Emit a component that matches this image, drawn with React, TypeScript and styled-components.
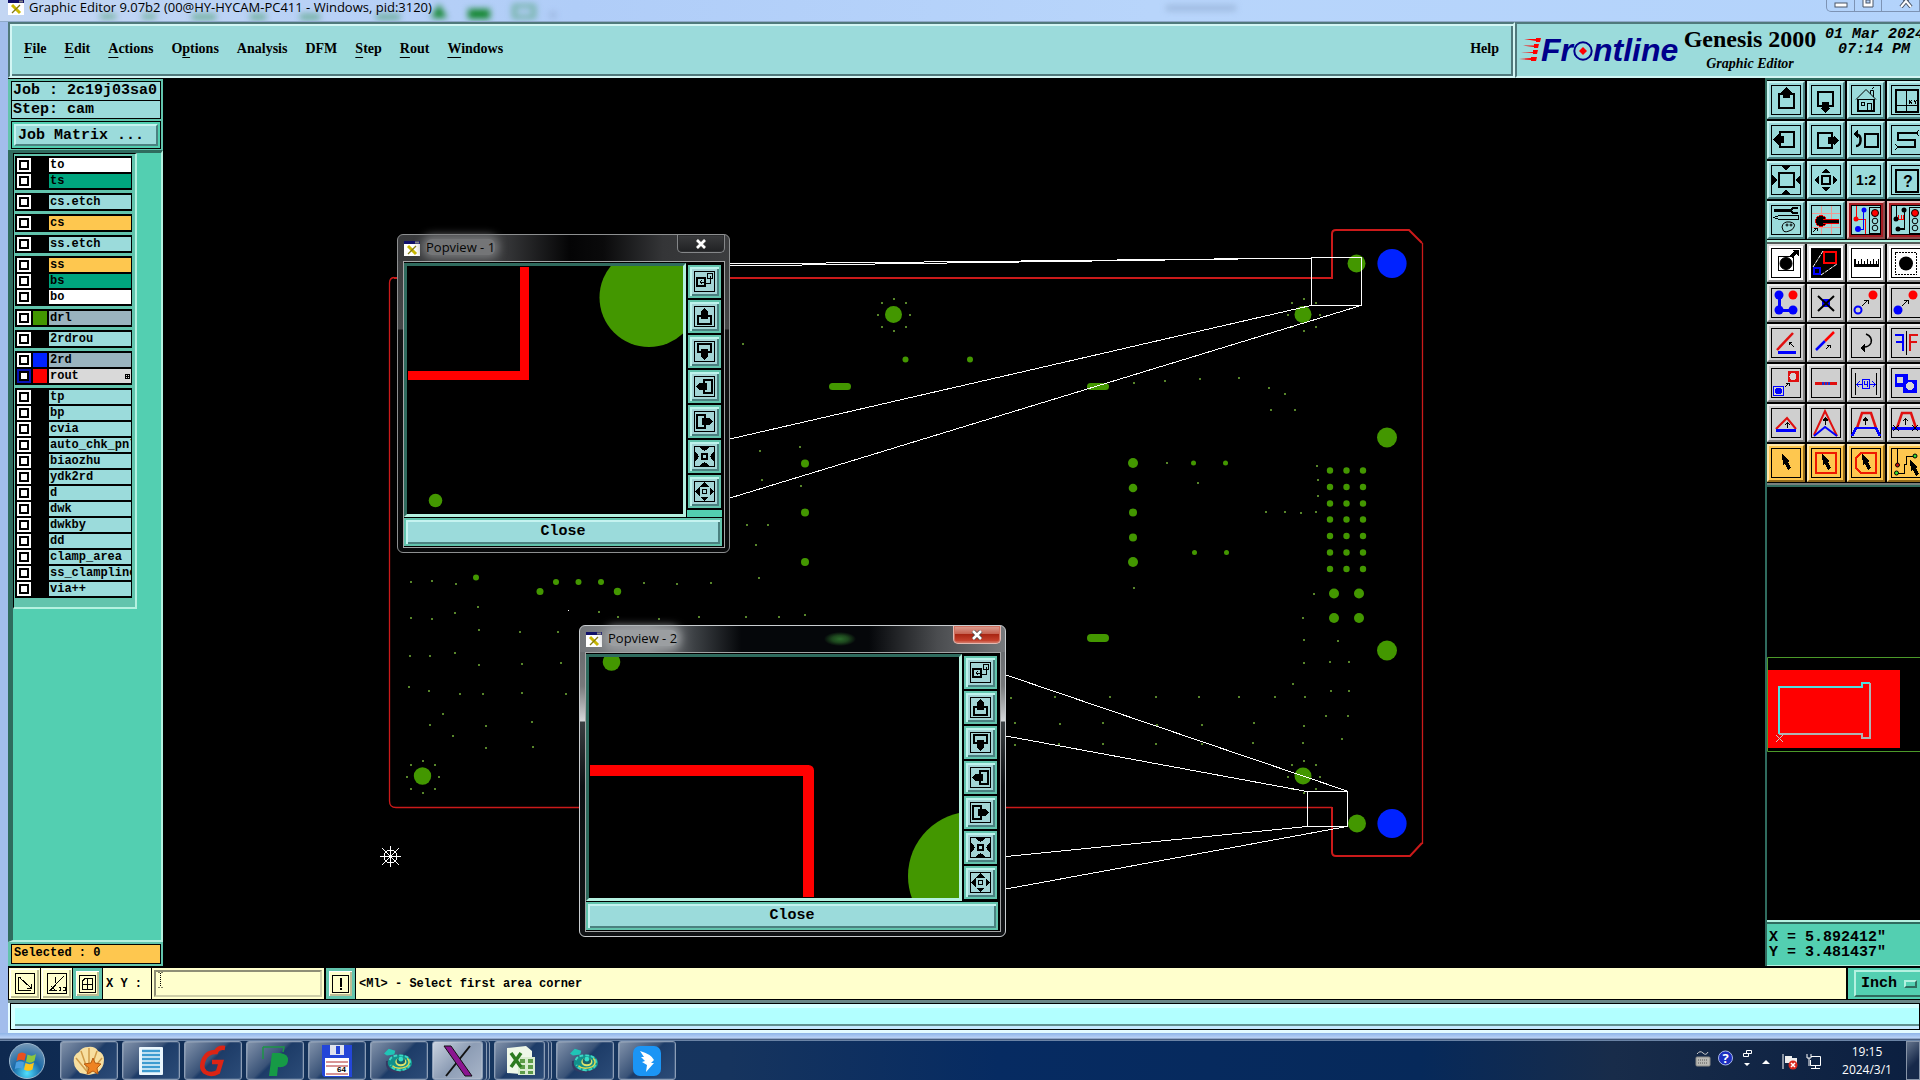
import React from "react";
import styled, { createGlobalStyle, css } from "styled-components";

const c = {
  teal: "#53cfb1",
  tealMid: "#62c4ad",
  tealDark: "#2f6b5e",
  tealLight: "#b4f1e0",
  aqua: "#9bdbdb",
  aquaLight: "#d3f6f4",
  aquaDark: "#50797c",
  amber: "#fec74f",
  cream: "#ffffcd",
  green: "#439700",
  red: "#ff0000",
  blue: "#0022ff",
};
const mono = `"Liberation Mono", "DejaVu Sans Mono", monospace`;
const serif = `"Liberation Serif", "DejaVu Serif", serif`;
const ui = `"Open Sans", "Noto Sans", sans-serif`;

const GlobalStyle = createGlobalStyle`
  * { box-sizing: border-box; }
  body { margin: 0; background: #000; overflow: hidden; }
  button, input, select { font: inherit; color: inherit; margin: 0; padding: 0; border-radius: 0; }
  svg { display: block; }
`;

const raised = css`
  border: 2px solid;
  border-color: #c5f3f0 #4b8180 #4b8180 #c5f3f0;
`;

const Desktop = styled.div`
  display: flex;
  flex-direction: column;
  height: 100vh;
  overflow: hidden;
  color: #000;
  background: #b7d2f7;
`;

/* ---------- title bar ---------- */
const TitleBar = styled.header`
  position: relative;
  display: flex;
  flex: none;
  height: 22px;
  padding: 0 0 0 8px;
  gap: 5px;
  overflow: hidden;
  background: linear-gradient(90deg, #c3d6f3, #b0cdf8 30%, #b8d5fb 60%, #b3d3fb);
  border-bottom: 1px solid #8fa9c9;
`;
const Glow = styled.svg`
  position: absolute;
  left: 0;
  top: 0;
  filter: blur(3px);
`;
const TitleText = styled.h1`
  position: relative;
  margin: 0;
  font: 400 13px/14px ${ui};
  white-space: nowrap;
`;
const Caption = styled.div`
  position: relative;
  display: flex;
  margin-left: auto;
  height: 12px;
  width: 94px;
  flex: none;
  border: 1px solid #7d93b4;
  border-top: 0;
  border-radius: 0 0 0 5px;
`;
const CaptionButton = styled.button<{ $w: number }>`
  flex: none;
  display: flex;
  justify-content: center;
  align-items: flex-start;
  width: ${(p) => p.$w}px;
  background: none;
  border: 0;
  border-right: 1px solid #7d93b4;
`;

/* ---------- frame ---------- */
const Frame = styled.div`
  flex: 1;
  min-height: 0;
  display: flex;
  flex-direction: column;
  border-left: 8px solid #a2bdec;
  box-shadow: inset 1px 0 0 #1d2b38;
`;
const Header = styled.div`
  display: flex;
  flex: none;
  height: 56px;
`;
const MenuBar = styled.nav`
  flex: 1;
  display: flex;
  align-items: center;
  gap: 18px;
  padding: 0 14px 2px 14px;
  background: ${c.aqua};
  border: 2px solid;
  border-color: ${c.aquaDark} ${c.aquaLight} ${c.aquaLight} ${c.aquaDark};
  box-shadow: inset 2px 2px 0 ${c.aquaLight}, inset -2px -2px 0 ${c.aquaDark};
`;
const MenuItem = styled.button<{ $end?: boolean }>`
  background: none;
  border: 0;
  font: 700 14px/20px ${serif};
  margin-left: ${(p) => (p.$end ? "auto" : "0")};
  u { text-underline-offset: 4px; }
`;
const Brand = styled.div`
  flex: none;
  width: 405px;
  display: flex;
  padding: 2px 0 0 2px;
  overflow: hidden;
  background: ${c.aqua};
  border: 2px solid;
  border-color: ${c.aquaDark} ${c.aquaLight} ${c.aquaLight} ${c.aquaDark};
  border-right: 0;
`;
const Logo = styled.div`
  display: flex;
  align-items: center;
  height: 48px;
  width: 162px;
  flex: none;
  color: #00008b;
  font: italic 700 32px/32px "Liberation Sans", sans-serif;
`;
const Product = styled.div`
  width: 138px;
  flex: none;
  text-align: center;
  white-space: nowrap;
`;
const ProductName = styled.div`
  font: 700 24px/26px ${serif};
`;
const ProductTool = styled.div`
  font: italic 700 14px/24px ${serif};
`;
const Clock = styled.div`
  flex: none;
  width: 104px;
  text-align: center;
  font: italic 700 15px/15px ${mono};
  padding: 1px 0 0 6px;
  white-space: nowrap;
`;

/* ---------- work area ---------- */
const Work = styled.div`
  flex: 1;
  min-height: 0;
  display: flex;
`;
const Sidebar = styled.aside`
  flex: none;
  width: 155px;
  display: flex;
  flex-direction: column;
  background: ${c.tealMid};
  border-top: 1px solid #000;
`;
const JobInfo = styled.div`
  margin: 2px 2px 0 3px;
  display: flex;
  flex-direction: column;
  gap: 2px;
  font: 700 15px/17px ${mono};
  white-space: nowrap;
`;
const InfoTable = styled.div`
  border: 1px solid #000;
  background: ${c.aqua};
`;
const InfoLine = styled.div`
  height: 18px;
  padding-left: 1px;
  & + & { border-top: 1px solid #000; }
`;
const MatrixFrame = styled.div`
  border: 1px solid #000;
  background: ${c.teal};
  padding: 2px;
`;
const MatrixButton = styled.button`
  display: block;
  width: 100%;
  height: 22px;
  text-align: left;
  padding-left: 2px;
  background: ${c.aqua};
  ${raised}
`;
const LayerPane = styled.div`
  flex: 1;
  min-height: 0;
  margin-top: 1px;
  background: ${c.teal};
  border: 2px solid;
  border-width: 3px 2px 2px 5px;
  border-color: ${c.tealDark} ${c.tealLight} ${c.tealLight} ${c.tealDark};
`;
const LayerList = styled.div`
  width: 124px;
  padding: 2px 3px 9px 1px;
  display: flex;
  flex-direction: column;
  gap: 3px;
  border: 1px solid #000;
  border-width: 1px 2px 2px 1px;
  border-color: #000 ${c.tealLight} ${c.tealLight} #000;
  background: ${c.tealMid};
`;
const LayerGroup = styled.div`
  background: #000;
  padding: 1px 1px 1px 2px;
`;
const LayerRow = styled.label`
  display: flex;
  align-items: center;
  gap: 2px;
  height: 16px;
`;
const LayerCheck = styled.input<{ $active?: boolean }>`
  appearance: none;
  flex: none;
  width: 14px;
  height: 14px;
  background: #fff;
  box-shadow: inset 0 0 0 2px ${(p) => (p.$active ? "#0a14b8" : "#fff")}, inset 0 0 0 4px #000;
`;
const Swatch = styled.span<{ $color?: string }>`
  flex: none;
  width: 14px;
  height: 14px;
  background: ${(p) => p.$color || "#000"};
`;
const LayerName = styled.span<{ $bg: string }>`
  flex: 1;
  min-width: 0;
  display: flex;
  align-items: center;
  justify-content: space-between;
  height: 14px;
  padding: 0 1px;
  overflow: hidden;
  white-space: nowrap;
  background: ${(p) => p.$bg};
  font: 700 12px/14px ${mono};
`;
const Selected = styled.div`
  flex: none;
  height: 20px;
  margin: 2px 2px 2px 3px;
  padding-left: 2px;
  border: 1px solid #000;
  background: ${c.amber};
  font: 700 12px/17px ${mono};
`;
const Canvas = styled.main`
  position: relative;
  flex: 1;
  min-width: 0;
  overflow: hidden;
  background: #000;
`;
const Board = styled.svg`
  width: 100%;
`;

/* ---------- popview windows ---------- */
const Pop = styled.section<{ $x: number; $y: number; $w: number; $h: number; $active?: boolean }>`
  position: absolute;
  left: ${(p) => p.$x}px;
  top: ${(p) => p.$y}px;
  width: ${(p) => p.$w}px;
  height: ${(p) => p.$h}px;
  display: flex;
  flex-direction: column;
  padding: 0 4px 4px 5px;
  border: 1px solid ${(p) => (p.$active ? "#c9cdd0" : "#8d8f90")};
  border-radius: 6px;
  background: ${(p) =>
    p.$active
      ? "radial-gradient(ellipse 16px 7px at 260px 13px, #2b6a2b, #1d471e 50%, transparent), linear-gradient(180deg, transparent 26px, #6a6d70 26px, #77797b 60px, #d5d8da 95px, #3a3f42 96px, #0c0f12 160px, #101214), linear-gradient(90deg, #73767a, #8b8d90 16%, #3c4044 27%, #05070a 38%, #05070a 68%, #4a4c4f 84%, #77797c)"
      : "linear-gradient(180deg, transparent 26px, #3c3d3e 26px, #454748 94px, #131415 95px, #08090a), linear-gradient(90deg, #38393b, #3c3d3f 30%, #040405 52%, #0a0a0b 62%, #343537 80%, #3c3d3f)"};
`;
const PopTitle = styled.header`
  flex: none;
  display: flex;
  height: 26px;
  padding: 4px 0 0 1px;
  gap: 6px;
  color: #050505;
`;
const PopName = styled.h2<{ $active?: boolean }>`
  margin: 0;
  height: 16px;
  font: 400 13px/16px ${ui};
  background: ${(p) => (p.$active ? "#9b9ea1" : "#747577")};
  box-shadow: 0 0 8px 4px ${(p) => (p.$active ? "#9b9ea1" : "#747577")};
  border-radius: 6px;
`;
const PopX = styled.button<{ $active?: boolean }>`
  margin: -4px 0 0 auto;
  width: 48px;
  height: 18px;
  display: flex;
  justify-content: center;
  align-items: center;
  border: 1px solid ${(p) => (p.$active ? "#e5b9b1" : "#858789")};
  border-top: 0;
  border-radius: 0 0 5px 5px;
  background: ${(p) =>
    p.$active
      ? "linear-gradient(180deg, #dca093, #c76453 45%, #a92613 50%, #c4402c 85%, #dd8373)"
      : "linear-gradient(180deg, #3a3b3d, #202123)"};
  box-shadow: inset 0 0 0 1px ${(p) => (p.$active ? "#d0705f" : "#2c2d2f")};
`;
const PopBody = styled.div`
  flex: 1;
  min-height: 0;
  display: grid;
  grid-template: 1fr 28px / 1fr 35px;
  gap: 1px;
  padding: 1px 2px 1px 0;
  background: #000;
  border: 1px solid #a3a5a6;
`;
const PopView = styled.div`
  min-width: 0;
  min-height: 0;
  overflow: hidden;
  border: 3px solid;
  border-color: ${c.tealDark} ${c.tealLight} ${c.tealLight} ${c.tealDark};
  background: #000;
`;
const PopTools = styled.div`
  min-height: 0;
  overflow: hidden;
  display: flex;
  flex-direction: column;
  gap: 2px;
  padding: 2px 1px 0;
  background: linear-gradient(#000 247px, ${c.teal} 247px);
`;
const PopTool = styled.button`
  flex: none;
  display: flex;
  align-items: center;
  justify-content: center;
  height: 33px;
  border: 2px solid ${c.tealMid};
  background: #a4d5d6;
  box-shadow: inset 2px 2px 0 #bdf3ec, inset -2px -2px 0 #4b8180;
`;
const CloseButton = styled.button`
  grid-column: 1 / 3;
  border: 2px solid ${c.tealMid};
  background: ${c.aqua};
  box-shadow: inset 2px 2px 0 #c5f3f0, inset -2px -2px 0 #4b8180;
  font: 700 15px/20px ${mono};
`;

/* ---------- right column ---------- */
const RightPane = styled.aside`
  flex: none;
  width: 155px;
  display: flex;
  flex-direction: column;
  overflow: hidden;
  padding-top: 1px;
  border-left: 2px solid ${c.tealDark};
  border-top: 2px solid ${c.tealDark};
  background: #000;
`;
const ToolGrid = styled.div<{ $second?: boolean }>`
  flex: none;
  display: grid;
  grid-template-columns: repeat(4, 38px);
  gap: 2px;
  padding-bottom: 1px;
  border-bottom: 2px solid ${(p) => (p.$second ? "#77807e" : c.tealLight)};
  ${(p) => p.$second && "border-top: 2px solid #555d5b;"}
`;
type Tone = "aqua" | "red" | "white" | "gray" | "amber";
const tones: Record<Tone, [string, string, string]> = {
  aqua: [c.aqua, "#c5f3f0", "#4b8180"],
  red: ["#a81c22", "#e9b8b8", "#8a4b4b"],
  white: ["#ffffff", "#e2e2e2", "#909090"],
  gray: ["#cfcfcf", "#ececec", "#828282"],
  amber: [c.amber, "#ffe6a8", "#946c1b"],
};
const ToolButton = styled.button<{ $tone: Tone }>`
  display: flex;
  align-items: center;
  justify-content: center;
  width: 38px;
  height: 38px;
  background: ${(p) => tones[p.$tone][0]};
  border: 2px solid;
  border-color: ${(p) => `${tones[p.$tone][1]} ${tones[p.$tone][2]} ${tones[p.$tone][2]} ${tones[p.$tone][1]}`};
`;
const Overview = styled.div`
  flex: 1;
  min-height: 0;
  overflow: hidden;
  border-top: 2px solid ${c.tealDark};
`;
const Coords = styled.div`
  flex: none;
  height: 46px;
  padding: 8px 0 0 2px;
  border-top: 2px solid ${c.tealLight};
  border-bottom: 1px solid ${c.tealLight};
  box-shadow: inset 0 2px 0 ${c.tealDark};
  background: ${c.teal};
  font: 700 15px/15px ${mono};
  white-space: pre;
`;

/* ---------- prompt row ---------- */
const Prompt = styled.div`
  flex: none;
  display: flex;
  height: 34px;
  padding: 2px 0 1px 1px;
  gap: 1px;
  background: #000;
  font: 700 12px/14px ${mono};
`;
const SnapButton = styled.button<{ $on?: boolean }>`
  flex: none;
  display: flex;
  align-items: center;
  justify-content: center;
  width: ${(p) => (p.$on ? 29 : 31)}px;
  background: ${c.cream};
  border: ${(p) => (p.$on ? `3px solid ${c.tealMid}` : `1px solid ${c.cream}`)};
  box-shadow: inset 1px 1px 0 #fff, inset -2px -2px 0 #bdbd96;
`;
const EntryLabel = styled.label`
  flex: none;
  display: flex;
  align-items: center;
  width: 48px;
  padding-left: 3px;
  background: ${c.cream};
  white-space: pre;
`;
const EntryBox = styled.div`
  position: relative;
  flex: none;
  display: flex;
  width: 172px;
  padding: 2px;
  margin-right: 1px;
  background: ${c.cream};
`;
const Entry = styled.input`
  width: 100%;
  background: ${c.cream};
  border: 2px solid;
  border-color: #8f8f76 #cfcfa8 #cfcfa8 #8f8f76;
  padding-left: 3px;
  outline: 0;
`;
const Pointer = styled.svg`
  position: absolute;
  left: 6px;
  top: 4px;
`;
const Message = styled.output`
  flex: 1;
  display: flex;
  align-items: center;
  padding-left: 3px;
  background: ${c.cream};
`;
const UnitBox = styled.label`
  position: relative;
  flex: none;
  width: 72px;
  padding: 2px 0 2px 6px;
  margin-left: 1px;
  background: ${c.teal};
`;
const UnitSelect = styled.select`
  appearance: none;
  width: 100%;
  height: 100%;
  padding-left: 5px;
  background: ${c.teal};
  border: 2px solid;
  border-color: ${c.tealLight} ${c.tealDark} ${c.tealDark} ${c.tealLight};
  border-right: 0;
  font: 700 15px/20px ${mono};
`;
const UnitMark = styled.i`
  position: absolute;
  right: 3px;
  top: 12px;
  width: 13px;
  height: 8px;
  border: 2px solid;
  border-color: ${c.tealLight} ${c.tealDark} ${c.tealDark} ${c.tealLight};
`;
const Status = styled.footer`
  flex: none;
  height: 33px;
  padding: 3px 0 3px 2px;
  background: linear-gradient(#6b8686 3px, #e4fbff 3px);
`;
const StatusBar = styled.div`
  height: 27px;
  border: 1px solid #000;
  background: #b2ffff;
  box-shadow: inset 4px 4px 0 #d6ffff, inset 0 -3px 0 #c5e9ff, inset 0 -5px 0 #5f8f8f;
`;
const BottomEdge = styled.div`
  flex: none;
  height: 7px;
  background: linear-gradient(#8fb5e8, #b9d1f5 70%, #2a3c5a);
`;

/* ---------- taskbar ---------- */
const Taskbar = styled.nav`
  flex: none;
  display: flex;
  height: 40px;
  padding-left: 8px;
  border-top: 1px solid #6b84a6;
  color: #fff;
  background: linear-gradient(90deg, #0e2950, #16365f 25%, #16345e 38%, #062b62 52%, #06295a 74%, #182c4a 84%, #0b1f40);
`;
const StartButton = styled.button`
  width: 38px;
  margin-right: 14px;
  flex: none;
  border: 0;
  background: none;
`;
const TaskButton = styled.button<{ $active?: boolean; $stacked?: boolean }>`
  flex: none;
  display: flex;
  align-items: center;
  justify-content: center;
  width: ${(p) => (p.$stacked ? 51 : 58)}px;
  margin-right: ${(p) => (p.$stacked ? 11 : 4)}px;
  border: 1px solid #8b9db6;
  border-radius: 3px;
  background: ${(p) =>
    p.$active
      ? "linear-gradient(135deg, #c9d2df, #8d9db5 50%, #a8b5c9)"
      : "linear-gradient(135deg, #8293ab, #3a5378 45%, #1d3c68 50%, #2c4c78)"};
  box-shadow: inset 0 0 0 1px #ffffff22${(p) => (p.$stacked ? ", 3px 0 0 #24406a, 4px 0 0 #8b9db6, 6px 0 0 #24406a, 7px 0 0 #8b9db6" : "")};
`;
const Tray = styled.div`
  margin-left: auto;
  display: flex;
  align-items: center;
`;
const TrayClock = styled.time`
  width: 78px;
  text-align: center;
  font: 400 12px/18px ${ui};
`;
const ShowDesktop = styled.button`
  width: 14px;
  height: 39px;
  flex: none;
  border: 1px solid #8794a8;
  background: linear-gradient(135deg, #64748c, #17294a 60%);
`;

/* ---------- icons ---------- */
const K = "#000";
const Ico = ({ s = 30, bg, children }: { s?: number; bg?: string; children: React.ReactNode }) => (
  <svg width={s} height={s} viewBox={`0 0 ${s} ${s}`} fill="none" stroke={K} strokeWidth={1} shapeRendering="crispEdges">
    <rect x=".5" y=".5" width={s - 1} height={s - 1} fill={bg || "none"} />
    {children}
  </svg>
);

const PanUp = () => (<><rect x="8" y="9" width="15" height="14" strokeWidth="2" /><path d="M15.500 2 L21 7.500 H19 V13 H12 V7.500 H10 Z" fill={K} stroke="none" /></>);
const turned = (deg: number) => <g transform={`rotate(${deg} 15 15)`}><PanUp /></g>;
const Cursor = ({ x = 0, y = 0 }) => <path transform={`translate(${x} ${y})`} d="M11 6 L19 13 L17 14 L20 20 L17 22 L14 16 L12 17 Z" fill={K} stroke="none" />;
const Light = () => (<><rect x="18.500" y="2.500" width="11" height="26" /><g shapeRendering="auto"><circle cx="24" cy="8" r="3.500" fill="red" /><circle cx="24" cy="16" r="2.800" /><circle cx="24" cy="23" r="2.800" /></g></>);

const tools1: { name: string; tone: Tone; bg?: string; art: React.ReactNode }[] = [
  { name: "Pan up", tone: "aqua", art: <PanUp /> },
  { name: "Pan down", tone: "aqua", art: turned(180) },
  { name: "Home view", tone: "aqua", art: <><path d="M5 14.500 L15 4.500 L25 14.500 M19.500 9 V5.500 h3 V12 M21 4 l2 -2" shapeRendering="auto" /><path d="M7 14.500 H23 V26 H7 Z" strokeWidth="1.500" /><path d="M10.500 17.500 h3 v3 h-3 z M16.500 26 v-8 h4 v8" /></> },
  { name: "Grid origin", tone: "aqua", art: <><rect x="5" y="5" width="22" height="22" strokeWidth="2" /><path d="M15.500 5 V27 M5 20.500 H27 M18 15 l3 4 M21 15 l-3 4 M23 15 l1.500 2 l1.500 -2 M24.500 17 v2" /></> },
  { name: "Pan left", tone: "aqua", art: turned(270) },
  { name: "Pan right", tone: "aqua", art: turned(90) },
  { name: "Previous view", tone: "aqua", art: <><rect x="14" y="9" width="13" height="13" strokeWidth="2" /><path d="M5 10 Q10 9 9.500 16 Q9 21 5 21" strokeWidth="2.500" shapeRendering="auto" /><path d="M2 9 L7 5 V13 Z" fill={K} stroke="none" /></> },
  { name: "Serpentine", tone: "aqua", art: <><path d="M27 8 H7 V15 H24 V22 H6" strokeWidth="2" /><path d="M28 5 l-3 3 l3 3 M4 19 l3 3 l-3 3" /></> },
  { name: "Zoom in", tone: "aqua", art: <><rect x="8" y="8" width="15" height="14" strokeWidth="2" /><path d="M10 1 h10 l-5 4 z M10 29 h10 l-5 -4 z M1 10 v10 l5 -5 z M29 10 v10 l-5 -5 z" fill={K} stroke="none" /></> },
  { name: "Zoom out", tone: "aqua", art: <><rect x="11" y="11" width="8" height="8" strokeWidth="2" /><path d="M10 8 h10 l-5 -4 z M10 22 h10 l-5 4 z M8 10 v10 l-4 -5 z M22 10 v10 l4 -5 z" fill={K} stroke="none" /></> },
  { name: "Scale", tone: "aqua", art: <text x="15" y="20" fill={K} stroke="none" textAnchor="middle" fontFamily="Liberation Sans" fontWeight="700" fontSize="14">1:2</text> },
  { name: "Query", tone: "aqua", art: <><rect x="5" y="5" width="22" height="22" strokeWidth="2" /><text x="17" y="22" fill={K} stroke="none" textAnchor="middle" fontFamily="Liberation Sans" fontWeight="700" fontSize="16">?</text></> },
  { name: "Tools", tone: "aqua", art: <><path d="M3 5.500 H20" strokeWidth="3" /><path d="M27 3 H22 L19 5.500 L22 8 H27" strokeWidth="2" /><path d="M3 12.500 L8 10.500 H27 V14.500 H8 Z" /><g shapeRendering="auto"><path d="M11 22 Q12 16 19 17 Q25 18 23 22 Q22 25 18 26 Q13 28 12 25 Z" /><circle cx="16" cy="20" r="1" /><circle cx="20" cy="20" r="1" /></g></> },
  { name: "Snap", tone: "aqua", art: <><path d="M10 1 V29 M20 1 V29 M1 8 H29 M1 22 H29" stroke="#f09a94" /><circle cx="10" cy="16" r="5.500" fill={K} stroke="#e00" /><path d="M12 16 H28" stroke="#e00" strokeWidth="5" /><path d="M10 16 H28" strokeWidth="3" /><path d="M2 27 l4 -4 M3 23 h3 v3" /></> },
  { name: "Net compare", tone: "red", bg: c.aqua, art: <><path d="M5.500 1 V14 L5 14.500 H14.500 V29" stroke="red" /><path d="M12.500 6 V24 H8" stroke="#00f" /><g shapeRendering="auto" stroke="none"><circle cx="5" cy="14" r="2.500" fill="red" /><circle cx="13" cy="5" r="2.500" fill="#00f" /><circle cx="7" cy="24" r="3" fill="#00f" /></g><Light /></> },
  { name: "Net check", tone: "red", bg: c.aqua, art: <><path d="M5.500 1 V14 M13.500 6 V24 H8" strokeWidth="1.500" /><path d="M7 10 v4 M10 10 v4 M12 10 v4 M6 14 h7" stroke="red" /><g shapeRendering="auto" stroke="none" fill={K}><circle cx="5" cy="14" r="2.500" /><circle cx="13" cy="5" r="2.500" /><circle cx="7" cy="24" r="2.500" /></g><Light /></> },
];

const tools2: { name: string; tone: Tone; bg?: string; art: React.ReactNode }[] = [
  { name: "Select feature", tone: "white", art: <><rect x="7.500" y="8.500" width="15" height="14" /><circle cx="15" cy="15.500" r="6" fill={K} shapeRendering="auto" /><path d="M20 9 L25 4" strokeWidth="3" /><path d="M21 2 H28 V9 Z" fill={K} stroke="none" /></> },
  { name: "Popview", tone: "white", bg: K, art: <><rect x="13" y="4" width="12" height="11" stroke="red" strokeWidth="2" /><rect x="3" y="20" width="6" height="6" stroke="#00f" strokeWidth="2" /><path d="M2 19 L12 3 M10 27 L26 16" stroke="#fff" strokeDasharray="4 1" shapeRendering="auto" /></> },
  { name: "Measure", tone: "white", art: <path d="M3 11 V19 H28 V11 h-1 v5 h-1 v-3 h-1 v3 h-2 v-5 h-1 v5 h-2 v-3 h-1 v3 h-2 v-5 h-1 v5 h-2 v-3 h-1 v3 h-2 v-5 h-1 v5 h-2 v-3 h-1 v3 h-2 v-5 Z" fill={K} stroke="none" /> },
  { name: "Highlight", tone: "white", art: <><rect x="4.500" y="4.500" width="21" height="22" strokeDasharray="2 1" /><circle cx="15" cy="15.500" r="7" fill={K} stroke="none" shapeRendering="auto" /></> },
  { name: "Move net", tone: "gray", art: <><path d="M8 7 V22 H22" stroke="#00f" strokeWidth="3" /><g stroke="none" fill="#00f" shapeRendering="auto"><circle cx="8" cy="7" r="4.500" /><circle cx="8" cy="22" r="4.500" /><circle cx="22" cy="22" r="4.500" /><circle cx="22" cy="7" r="4.500" fill="red" /></g></> },
  { name: "Delete", tone: "gray", art: <><circle cx="15" cy="15" r="4.500" fill="#00f" stroke="none" /><path d="M7 8 L23 23 M23 8 L7 23" strokeWidth="2" shapeRendering="auto" /></> },
  { name: "Copy", tone: "gray", art: <><g shapeRendering="auto"><circle cx="22" cy="7" r="4.500" fill="red" stroke="none" /><circle cx="7" cy="22" r="3.500" stroke="#00f" strokeWidth="2" /></g><path d="M11 18 L17 12 M13 12 h4 v4" /></> },
  { name: "Move", tone: "gray", art: <><g shapeRendering="auto" stroke="none"><circle cx="22" cy="7" r="4.500" fill="red" /><circle cx="7" cy="22" r="4.500" fill="#00f" /></g><path d="M11 18 L17 12 M13 12 h4 v4" /></> },
  { name: "Rotate line", tone: "gray", art: <><path d="M6 22 L22 5" stroke="#e01010" strokeWidth="2.500" shapeRendering="auto" /><path d="M7 24 H25" stroke="#00f" strokeWidth="3" /><path d="M23 19 L18 14 M18 17 v-3 h3" /></> },
  { name: "Extend line", tone: "gray", art: <><g shapeRendering="auto" strokeWidth="2.500"><path d="M5 22 L14 13" stroke="#00f" /><path d="M14 13 L23 4" stroke="red" /></g><path d="M15 21 L19 17 M16 17 h3 v3" /></> },
  { name: "Rotate", tone: "gray", art: <><path d="M15 6 Q22 9 20 15 Q18 19 13 19" strokeWidth="1.500" shapeRendering="auto" /><path d="M9 20 L14 16 V24 Z" fill={K} stroke="none" /></> },
  { name: "Mirror", tone: "gray", art: <><path d="M15.500 3 V27" /><path d="M4 7 H12 V23 M5 14 H12" stroke="#00f" strokeWidth="2.500" /><path d="M27 7 H19 V23 M26 14 H19" stroke="#e01010" strokeWidth="2.500" /></> },
  { name: "Change symbol", tone: "gray", art: <><rect x="17" y="3" width="11" height="11" fill="#e01010" stroke="none" /><circle cx="22" cy="8.500" r="3.500" fill="#d5d5d5" stroke="none" /><rect x="2.500" y="18.500" width="10" height="9" stroke="#00f" /><circle cx="7.500" cy="23" r="3.500" fill="#00f" stroke="none" /><path d="M14 19 l4 -4 M15 15 h3 v3" /></> },
  { name: "Break line", tone: "gray", art: <><path d="M4 15.500 H26" stroke="#e01010" strokeWidth="3" /><path d="M11 15.500 H19" stroke="#2030d0" strokeWidth="3" strokeDasharray="2 1" /></> },
  { name: "Spacing", tone: "gray", art: <><path d="M4.500 5 V27 M25.500 5 V27" /><path d="M6 16.500 H11 M19 16.500 H24 M8.500 13.500 l-3 3 l3 3 M21.500 13.500 l3 3 l-3 3" stroke="#00f" /><rect x="11.500" y="11.500" width="7" height="9" stroke="#00f" /><path d="M13.500 13 v3.500 h3 M16.500 13 v6" stroke="#00f" /></> },
  { name: "Merge", tone: "gray", art: <><path d="M4 6 H17 V12 H26 V25 H12 V19 H4 Z" fill="#00f" stroke="none" /><circle cx="9" cy="12" r="3.500" fill="#d5d5d5" stroke="none" /><circle cx="19" cy="18" r="4" fill="#d5d5d5" stroke="none" /></> },
  { name: "Triangle", tone: "gray", art: <><path d="M5 21 L16 10 L25 21" stroke="#e01010" strokeWidth="2" shapeRendering="auto" /><path d="M5 22.500 H25" stroke="#00f" strokeWidth="3" /><path d="M16.500 20 v-5 M14 17 l2.500 -2 l2.500 2" /></> },
  { name: "Peak", tone: "gray", art: <><g strokeWidth="2" shapeRendering="auto"><path d="M3 27 L14 3 L26 28" stroke="#e01010" /><path d="M3 28 L14 19 L26 28" stroke="#00f" /></g><path d="M14.500 17 v-6 M12 13 l2.500 -2.500 l2.500 2.500" strokeWidth="1.500" /></> },
  { name: "Trapezoid", tone: "gray", art: <><path d="M6 20 L11 5 H20 L25 20" stroke="#e01010" strokeWidth="2.500" shapeRendering="auto" /><path d="M1 28 L5 20 H25 L29 28" stroke="#00f" strokeWidth="2.500" /><path d="M14.500 17 v-6 M12 13 l2.500 -2.500 l2.500 2.500" strokeWidth="1.500" /></> },
  { name: "Trapezoid cut", tone: "gray", art: <><path d="M6 20 L11 5 H20 L25 20" stroke="#e01010" strokeWidth="2.500" shapeRendering="auto" /><path d="M1 20 H29" stroke="#00f" strokeWidth="3" /><path d="M14.500 17 v-6 M12 13 l2.500 -2.500 l2.500 2.500 M2 17 l6 6 M8 17 l-6 6 M21 17 l6 6 M27 17 l-6 6" /></> },
  { name: "Pick", tone: "amber", art: <Cursor /> },
  { name: "Pick in box", tone: "amber", art: <><rect x="5" y="5" width="20" height="20" stroke="#f01800" strokeWidth="2" /><Cursor /></> },
  { name: "Pick in polygon", tone: "amber", art: <><path d="M10 5 H25 V25 H10 L5 20 V10 Z" stroke="#f01800" strokeWidth="2" /><Cursor /></> },
  { name: "Pick net", tone: "amber", art: <><path d="M6.500 1 V16 M6 25.500 H13.500 V16.500 H15.500 V8.500 H24" /><g shapeRendering="auto"><circle cx="6.500" cy="17" r="2" fill="#c01010" /><circle cx="5.500" cy="25" r="2" fill="#3d3" /><circle cx="24" cy="8" r="2" fill="#3d3" /></g><Cursor x={8} y={6} /></> },
];

const SPanUp = () => (<><path d="M7 10 H4 V18 H17 V10 H14" strokeWidth="2" /><path d="M10.500 2 L15 6 H14 V13 H7 V6 H6 Z" fill={K} stroke="none" /></>);
const sTurn = (deg: number) => <g transform={`rotate(${deg} 10.500 10.500)`}><SPanUp /></g>;
const popTools = [
  { name: "Link view", art: <><rect x="3" y="7" width="8" height="8" strokeWidth="2" /><rect x="13.500" y="2.500" width="5" height="5" /><path d="M12 12.500 H16.500 V5 M10 11 H6 M8 9 l-2 2 l2 2" /></> },
  { name: "Pan up", art: <SPanUp /> },
  { name: "Pan down", art: sTurn(180) },
  { name: "Pan left", art: sTurn(270) },
  { name: "Pan right", art: sTurn(90) },
  { name: "Zoom in", art: <><rect x="8" y="8" width="5" height="5" strokeWidth="2" /><path d="M5 1 h11 l-5.500 4 z M5 20 h11 l-5.500 -4 z M1 5 v11 l4 -5.500 z M20 5 v11 l-4 -5.500 z" fill={K} stroke="none" /></> },
  { name: "Zoom out", art: <><rect x="8.500" y="8.500" width="4" height="4" /><path d="M7 5 h7 l-3.500 -3.500 z M7 16 h7 l-3.500 3.500 z M5 7 v7 l-3.500 -3.500 z M16 7 v7 l3.500 -3.500 z" fill={K} stroke={K} /></> },
];

const AppIcon = () => (
  <svg width="16" height="15" viewBox="0 0 16 15">
    <rect width="16" height="15" fill="#fff" />
    <rect width="16" height="3" fill="#10106a" />
    <path d="M11 .5h4v2h-4z" fill="#888" />
    <path d="M4 5 L12 13" stroke="#c9b800" strokeWidth="3" />
    <path d="M12 5 L4 13" stroke="#857c10" strokeWidth="1.300" />
  </svg>
);
const CloseGlyph = () => (
  <svg width="12" height="10" viewBox="0 0 12 10"><path d="M2 1 L10 9 M10 1 L2 9" stroke="#444" strokeWidth="4" /><path d="M2 1 L10 9 M10 1 L2 9" stroke="#fff" strokeWidth="2.600" /></svg>
);

/* ---------- board drawing ---------- */
const dots: [number, number, number][] = [
  [1356.500, 263.500, 9], [1303, 314.500, 8.500], [893.500, 314.500, 8.500], [1387, 437.500, 10], [1387, 650.500, 10], [422.500, 776, 8.700], [1303, 776, 8.500], [1357, 823.500, 9],
  [1133, 463, 5], [1133, 488, 4.300], [1133, 512.500, 4], [1133, 537.500, 4], [1133, 562, 5],
  [1334, 593.500, 5], [1359, 593.500, 5], [1334, 618, 5], [1359, 618, 5],
  [1193.500, 463, 2.500], [1225.500, 463, 2.500], [1194.500, 552.500, 2.500], [1226.500, 552.500, 2.500],
  [805, 463.500, 4], [805, 512.500, 4], [805, 562, 4], [905.500, 359.500, 3], [970, 359.500, 3],
  [476, 577.500, 3], [540, 591.500, 3.500], [556, 582, 3], [578.500, 582, 3], [601, 582, 3], [617.500, 591.500, 3.700],
];
for (const x of [1330, 1346.500, 1363]) for (const y of [470.500, 487, 503.500, 519.500, 536, 552.500, 569]) dots.push([x, y, 3.200]);

const vias = [
  1133, 382, 1164, 380, 1199, 378, 1238, 377, 1268, 387, 1284, 393, 1270, 409, 1294, 409, 1166, 462, 1316, 465, 1197, 482, 1317, 479, 1317, 495,
  1265, 511, 1284, 511, 1300, 512, 1315, 511, 1133, 587, 1313, 593, 1302, 617, 1303, 639, 1337, 640, 1303, 662, 1329, 661, 1348, 661, 1292, 683,
  1330, 690, 1348, 690, 1109, 696, 1155, 696, 1198, 696, 1238, 696, 1274, 696, 1304, 696, 1010, 697, 1054, 696, 1014, 722, 1059, 723, 1102, 722,
  1156, 724, 1201, 724, 1253, 722, 1014, 744, 1058, 743, 1102, 743, 1155, 743, 1201, 743, 1252, 742, 1325, 715, 1347, 715, 1303, 725, 1341, 738,
  1302, 742, 742, 343, 759, 450, 799, 446, 761, 479, 800, 485, 746, 524, 767, 524, 755, 544, 410, 581, 431, 580, 455, 583, 643, 582, 676, 583,
  710, 582, 758, 577, 410, 617, 431, 618, 454, 612, 477, 606, 598, 611, 617, 616, 658, 618, 698, 616, 745, 616, 778, 616, 804, 614, 478, 629,
  519, 631, 557, 631, 409, 655, 429, 655, 454, 652, 478, 664, 521, 663, 560, 662, 408, 686, 428, 690, 459, 693, 482, 693, 521, 692, 565, 693,
  442, 713, 429, 724, 452, 735, 485, 725, 531, 721, 485, 747, 532, 746,
];
for (const [x, y] of [[1303, 314], [893, 314], [422, 776], [1303, 776]])
  for (const [dx, dy] of [[0, -16], [12, -12], [16, 0], [12, 12], [0, 16], [-12, 12], [-16, 0], [-12, -12]]) vias.push(x + dx, y + dy);
const viaPath = vias.reduce((d, v, i) => (i % 2 ? d : `${d}M${v} ${vias[i + 1]}h2v2h-2z`), "");

const BoardDrawing = () => (
  <Board viewBox="163 78 1602 888" fill="none" role="img" aria-label="Board view">
    <g stroke="#cb1a1a" strokeWidth="2">
      <path d="M394 278 H1332 V234 Q1332 230 1336 230 H1409 L1422 243" />
      <path d="M1332 807 V852 Q1332 856 1336 856 H1410 L1422 843" />
      <path d="M394 277.500 Q389.500 278 389.500 283 V801 Q389.500 807.500 396 807.500 H1332 M1422.500 243 V844" strokeWidth="1.300" />
    </g>
    <g fill={c.green}>
      {dots.map(([x, y, r], i) => <circle key={i} cx={x} cy={y} r={r} />)}
      <rect x="829" y="383" width="22" height="7" rx="3.500" />
      <rect x="1087" y="383" width="22" height="7" rx="3.500" />
      <rect x="1087" y="634" width="22" height="8" rx="4" />
    </g>
    <path d={viaPath} fill="#57852a" shapeRendering="crispEdges" />
    <circle cx="1392" cy="263.500" r="14.600" fill={c.blue} />
    <circle cx="1392" cy="823.500" r="14.600" fill={c.blue} />
    <g stroke="#fff" shapeRendering="crispEdges">
      <path d="M1311.500 257.500 H1361.500 V305.500 H1311.500 Z M1307.500 791.500 H1347.500 V826.500 H1307.500 Z" />
      <path d="M730 266 L1311 258 M730 264 L1361 257.500 M730 439 L1311 305.500 M730 498 L1361 305.500" />
      <path d="M1006 675 L1347 791 M1006 736 L1307 791.500 M1006 856.500 L1307 826.500 M1006 889 L1347 826.500" />
      <path d="M390.500 846 V867 M380 856.500 H401 M382 848 L399 865 M399 848 L382 865" />
      <circle cx="390.500" cy="856.500" r="6.500" />
    </g>
    <rect x="568" y="610" width="1" height="1" fill="#fff" />
  </Board>
);

const AppIconBox = styled.span`
  padding-top: 2px;
`;
const PopWindow = ({ title, active, box, view, children }: { title: string; active?: boolean; box: [number, number, number, number]; view: string; children: React.ReactNode }) => (
  <Pop $x={box[0]} $y={box[1]} $w={box[2]} $h={box[3]} $active={active} aria-label={title}>
    <PopTitle>
      <AppIconBox><AppIcon /></AppIconBox>
      <PopName $active={active}>{title}</PopName>
      <PopX $active={active} aria-label="Close window"><CloseGlyph /></PopX>
    </PopTitle>
    <PopBody>
      <PopView><svg width="100%" height="100%" viewBox={view} preserveAspectRatio="xMinYMin slice">{children}</svg></PopView>
      <PopTools>
        {popTools.map((t) => <PopTool key={t.name} aria-label={t.name}><Ico s={21}>{t.art}</Ico></PopTool>)}
      </PopTools>
      <CloseButton>Close</CloseButton>
    </PopBody>
  </Pop>
);
const TitleIcon = styled.span`
  position: relative;
  flex: none;
`;

/* ---------- data ---------- */
const menus: [string, string, string][] = [
  ["", "F", "ile"], ["", "E", "dit"], ["", "A", "ctions"], ["O", "p", "tions"], ["Analysis", "", ""], ["DFM", "", ""], ["", "S", "tep"], ["", "R", "out"], ["", "W", "indows"],
];
type Layer = { n: string; bg?: string; sw?: string; active?: boolean };
const w = "#ffffff", g = "#00a57e", s = "#9ab3be";
const layers: Layer[][] = [
  [{ n: "to", bg: w }, { n: "ts", bg: g }],
  [{ n: "cs.etch" }],
  [{ n: "cs", bg: c.amber }],
  [{ n: "ss.etch" }],
  [{ n: "ss", bg: c.amber }, { n: "bs", bg: g }, { n: "bo", bg: w }],
  [{ n: "drl", bg: s, sw: c.green }],
  [{ n: "2rdrou" }],
  [{ n: "2rd", bg: s, sw: c.blue }, { n: "rout", bg: "#d9d9d9", sw: c.red, active: true }],
  ["tp", "bp", "cvia", "auto_chk_pnl", "biaozhu", "ydk2rd", "d", "dwk", "dwkby", "dd", "clamp_area", "ss_clampline", "via++"].map((n) => ({ n })),
];

const Orb = () => (
  <svg width="38" height="38" viewBox="0 0 38 38">
    <defs><radialGradient id="orb" cx=".5" cy=".85" r=".8"><stop offset="0" stopColor="#4fe0ff" /><stop offset=".5" stopColor="#1a6aa8" /><stop offset="1" stopColor="#6d93b4" /></radialGradient></defs>
    <circle cx="19" cy="19" r="17.500" fill="url(#orb)" stroke="#9fb9cf" />
    <path d="M10 12 Q14 9 18 12 L16.500 19 Q13 16.500 8.500 19 Z" fill="#e8501e" />
    <path d="M19.500 12.500 Q24 15 28 12 L26.500 19 Q22 22 18 19.500 Z" fill="#8cc63e" />
    <path d="M8 20.500 Q12 18 16 20.500 L14.500 27 Q11 25 6.800 27 Z" fill="#4a9fe0" />
    <path d="M17.500 21 Q22 23.500 26 20.500 L24.500 27.500 Q20 30 16 27.500 Z" fill="#fcc419" />
  </svg>
);
const Mill = () => (
  <svg width="32" height="28" viewBox="0 0 34 30">
    <path d="M3 15 Q2 24 9 26 Q17 30 26 25 Q33 21 31 12 Z" fill="#343a63" />
    <ellipse cx="18" cy="17" rx="13" ry="9" fill="#12908c" />
    <path d="M7 14 Q9 9 17 9 Q29 9 29 17 Q28 24 18 25 Q9 24 8 19" fill="none" stroke="#3fd6c4" strokeWidth="2" strokeDasharray="4 2" />
    <path d="M10 20 Q15 25 25 21 Q30 17 26 12" stroke="#dcdc54" strokeWidth="1.500" fill="none" />
    <ellipse cx="19" cy="16" rx="6" ry="4.500" fill="#e0e46a" /><ellipse cx="19" cy="15" rx="4.500" ry="3.500" fill="#17636b" /><circle cx="19" cy="13" r="2.500" fill="#35e0c8" />
    <path d="M1 7 L6 2 L13 4 L12 8 L4 9 Z" fill="#20c4b6" />
  </svg>
);
const tasks: { name: string; active?: boolean; stacked?: boolean; art: React.ReactNode }[] = [
  { name: "Shell", art: <svg width="34" height="30" viewBox="0 0 34 30"><path d="M17 29 L8 27 Q0 20 2 11 Q4 7 7 6 Q10 1 16 1 Q23 0 26 5 Q32 7 32 14 Q32 22 25 27 Z" fill="#f7dfa0" /><path d="M17 28 L4 12 M17 28 L9 5 M17 28 L17 2 M17 28 L25 5 M17 28 L30 12" stroke="#d09c4a" strokeWidth="1.500" /><path d="M21 12 L23 17 L29 18 L25 22 L26 28 L21 25 L15 28 L17 22 L12 18 L19 17 Z" fill="#ee8322" stroke="#b85c10" /></svg> },
  { name: "Notes", art: <svg width="26" height="30" viewBox="0 0 26 30"><rect x="1" y="1" width="24" height="28" rx="1" fill="#eaf6fd" /><path d="M4 5H22M4 9H22M4 13H22M4 17H22M4 21H22M4 25H22" stroke="#3d9bd0" strokeWidth="2.500" /></svg> },
  { name: "G", art: <svg width="30" height="32" viewBox="0 0 30 32"><path d="M27 3 Q20 2 18 7 Q9 7 6 14 Q2 23 7 27 Q13 31 20 27 L23 17 H14" fill="none" stroke="#dc2414" strokeWidth="4.500" /></svg> },
  { name: "P", art: <svg width="30" height="32" viewBox="0 0 30 32"><path d="M3 2 H24 L23 7 M3 2 V14" fill="none" stroke="#1c9447" strokeWidth="1.500" /><path d="M9 31 L12 8 H20 Q29 9 28 16 Q27 23 18 22 L17 31 Z" fill="#169a46" /></svg> },
  { name: "Floppy 64", art: <svg width="32" height="34" viewBox="0 0 32 34"><path d="M1 1 H31 V33 H3 L1 31 Z" fill="#2446d8" /><rect x="9" y="1" width="14" height="10" fill="#dfe3ee" /><rect x="15" y="2" width="4" height="8" fill="#2446d8" /><rect x="4" y="14" width="24" height="18" fill="#fff" /><path d="M5 18H27M5 22H27M5 30H27" stroke="#b02828" /><text x="16" y="28" fontFamily="Liberation Sans" fontWeight="700" fontSize="8">64</text></svg> },
  { name: "CAM", art: <Mill /> },
  { name: "X server", active: true, stacked: true, art: <svg width="34" height="32" viewBox="0 0 34 32"><path d="M29 1 L5 31" stroke="#111" strokeWidth="2" /><path d="M3 1 H10 L31 31 H24 Z" fill="#8b1590" stroke="#111" /></svg> },
  { name: "Spreadsheet", stacked: true, art: <svg width="32" height="32" viewBox="0 0 32 32"><path d="M3 3 L22 1 L28 6 V30 L3 28 Z" fill="#eef7e8" /><path d="M14 12 H31 V30 H14 Z" fill="#d9ecd0" /><path d="M16 14h5v4h-5zM24 14h5v4h-5zM16 20h5v4h-5zM24 20h5v4h-5zM16 26h5v3h-5zM24 26h5v3h-5z" fill="#5d9c48" /><path d="M7 8 L17 22 M17 8 L7 22" stroke="#2c7a20" strokeWidth="3.500" /></svg> },
  { name: "CAM 2", art: <Mill /> },
  { name: "Wing", art: <svg width="28" height="30" viewBox="0 0 28 30"><rect width="28" height="30" rx="7" fill="#1b95f5" /><path d="M7 5 Q18 8 21 14 L18 17 L21 17 L13 26 L14 19 L9 16 L12 15 L8 11 L11 11 Z" fill="#fff" /></svg> },
];

export default function App() {
  return (
    <Desktop>
      <GlobalStyle />
      <TitleBar>
        <Glow width="1400" height="22" viewBox="0 0 1400 22">
          <g fill="#12862f">
            <path d="M431 18 L439 4 L447 18 Z M468 9 h22 v10 h-22 z" />
            <path d="M514 6 h20 v11 h-20 z" fill="none" stroke="#5aa884" strokeWidth="3" />
            <path d="M100 14 h16 v5 h-16 z M142 14 h14 v5 h-14 z M192 14 h24 v6 h-24 z M250 14 h16 v6 h-16 z M300 14 h20 v6 h-20 z M376 14 h24 v6 h-24 z" opacity=".45" />
          </g>
          <path d="M550 15 h6 M1166 8 h70" stroke="#7d93b8" strokeWidth="5" opacity=".5" />
        </Glow>
        <TitleIcon><AppIcon /></TitleIcon>
        <TitleText>Graphic Editor 9.07b2 (00@HY-HYCAM-PC411 - Windows, pid:3120)</TitleText>
        <Caption>
          <CaptionButton $w={28} aria-label="Minimize"><svg width="14" height="8" viewBox="0 0 14 8"><rect x="1" y="3" width="12" height="4" fill="#fff" stroke="#4a5668" /></svg></CaptionButton>
          <CaptionButton $w={27} aria-label="Maximize"><svg width="12" height="8" viewBox="0 0 12 8"><path d="M1 0 V7 H11 V0" fill="#fff" stroke="#4a5668" /><rect x="4" y="0" width="4" height="3" fill="#b4d3fb" stroke="#4a5668" /></svg></CaptionButton>
          <CaptionButton $w={48} aria-label="Close"><svg width="14" height="8" viewBox="0 0 14 8"><path d="M2 7 L7 1 L12 7 M4 -3 L7 1 L10 -3" stroke="#4a5668" strokeWidth="4" fill="none" /><path d="M2 7 L7 1 L12 7" stroke="#fff" strokeWidth="2" fill="none" /></svg></CaptionButton>
        </Caption>
      </TitleBar>
      <Frame>
        <Header>
          <MenuBar>
            {menus.map(([a, u, b]) => <MenuItem key={a + u + b}>{a}{u && <u>{u}</u>}{b}</MenuItem>)}
            <MenuItem $end>Help</MenuItem>
          </MenuBar>
          <Brand>
            <Logo>
              <svg width="22" height="26" viewBox="0 0 22 26" fill="#f00"><path d="M5 2 L17 2 V1 H22 L21 5 H17 V4 Z M4 8.500 L15 8.500 V7 H20 L19 11 H15 V10 Z M2 15 L14 15 V13 H19 L18 17 H14 V16 Z M0 22 L12 21 V20 H18 L17 24 H12 V23 Z" /></svg>
              <span>Fr</span>
              <svg width="20" height="26" viewBox="0 0 20 26"><circle cx="10" cy="14" r="8.700" fill="none" stroke="#00008b" strokeWidth="2" /><path d="M10 10 L14 14 L10 18 L6 14 Z" fill="#f00" /></svg>
              <span>ntline</span>
            </Logo>
            <Product>
              <ProductName>Genesis 2000</ProductName>
              <ProductTool>Graphic Editor</ProductTool>
            </Product>
            <Clock>01 Mar 2024<br />07:14 PM</Clock>
          </Brand>
        </Header>
        <Work>
          <Sidebar>
            <JobInfo>
              <InfoTable>
                <InfoLine>Job : 2c19j03sa0</InfoLine>
                <InfoLine>Step: cam</InfoLine>
              </InfoTable>
              <MatrixFrame><MatrixButton>Job Matrix ...</MatrixButton></MatrixFrame>
            </JobInfo>
            <LayerPane>
              <LayerList>
                {layers.map((group, i) => (
                  <LayerGroup key={i}>
                    {group.map((l) => (
                      <LayerRow key={l.n}>
                        <LayerCheck type="checkbox" $active={l.active} />
                        <Swatch $color={l.sw} />
                        <LayerName $bg={l.bg || c.aqua}>
                          {l.n}
                          {l.active && <svg width="5" height="5" viewBox="0 0 5 5" shapeRendering="crispEdges"><path d="M.5 .5h4v4h-4z M2.500 0v5 M0 2.500h5" fill="none" stroke="#000" /></svg>}
                        </LayerName>
                      </LayerRow>
                    ))}
                  </LayerGroup>
                ))}
              </LayerList>
            </LayerPane>
            <Selected>Selected : 0</Selected>
          </Sidebar>
          <Canvas>
            <BoardDrawing />
            <PopWindow title="Popview - 1" box={[234, 156, 333, 319]} view="407 266 276 249">
              <path d="M524.500 267 V375.500 H408" fill="none" stroke="red" strokeWidth="9" />
              <circle cx="649" cy="297.500" r="49.500" fill={c.green} />
              <circle cx="435.500" cy="500.500" r="6.800" fill={c.green} />
            </PopWindow>
            <PopWindow title="Popview - 2" active box={[416, 547, 427, 312]} view="589 657 370 241">
              <path d="M590 770.500 H808.500 V897" fill="none" stroke="red" strokeWidth="11" strokeLinejoin="round" />
              <circle cx="611.500" cy="662" r="8.800" fill={c.green} />
              <circle cx="972.500" cy="876" r="64.500" fill={c.green} />
            </PopWindow>
          </Canvas>
          <RightPane>
            <ToolGrid>
              {tools1.map((t) => <ToolButton key={t.name} $tone={t.tone} aria-label={t.name}><Ico bg={t.bg}>{t.art}</Ico></ToolButton>)}
            </ToolGrid>
            <ToolGrid $second>
              {tools2.map((t) => <ToolButton key={t.name} $tone={t.tone} aria-label={t.name}><Ico bg={t.bg}>{t.art}</Ico></ToolButton>)}
            </ToolGrid>
            <Overview>
              <svg width="153" height="432" viewBox="1767 487 153 432" fill="none" role="img" aria-label="Board overview">
                <rect x="1767" y="670" width="133" height="78" fill="red" />
                <path d="M1920 657.500 H1767.500 V751.500 H1920" stroke="#4c9a2a" />
                <path d="M1779 734 V687 H1862 V683 H1870" stroke="#4fe0e0" strokeWidth="2" />
                <path d="M1870 683 V738 H1862 V734 H1779" stroke="#b0b4b4" strokeWidth="2" />
                <path d="M1776 735 l7 7 M1783 735 l-7 7" stroke="#c9c9c9" />
              </svg>
            </Overview>
            <Coords>{'X = 5.892412"\nY = 3.481437"'}</Coords>
          </RightPane>
        </Work>
        <Prompt>
          <SnapButton aria-label="Relative"><svg width="24" height="24" viewBox="0 0 24 24" fill="none" stroke="#000" shapeRendering="crispEdges"><rect x="2.500" y="1.500" width="19" height="20" /><path d="M5.500 5 V18.500 H18 M6 5 L18 16 M5 8 V5 H8 M18 12 v4 h-4" /></svg></SnapButton>
          <SnapButton aria-label="Angle"><svg width="24" height="24" viewBox="0 0 24 24" fill="none" stroke="#000" shapeRendering="crispEdges"><rect x="2.500" y="1.500" width="19" height="20" /><path d="M19 4 L5 18.500 H12 M10 5 v6 M6 14 l4 4 M14 16 q2 -2 2 1 t-2 1 M18 15 h2 v3 h-2" /></svg></SnapButton>
          <SnapButton $on aria-label="Grid"><svg width="17" height="18" viewBox="0 0 17 18" fill="none" stroke="#000" shapeRendering="crispEdges"><rect x=".5" y=".5" width="16" height="17" /><path d="M3.500 14.500 V6 L6 3.500 H13.500 V14.500 Z M8.500 3 V15 M3 9.500 H14" /></svg></SnapButton>
          <EntryLabel htmlFor="xy">X Y :</EntryLabel>
          <EntryBox>
            <Entry id="xy" defaultValue="" />
            <Pointer width="5" height="16" viewBox="0 0 5 16" stroke="#000" fill="none"><path d="M2.500 1 V15 M.5 .5 h1 M3.500 .5 h1 M.5 15.500 h1 M3.500 15.500 h1" strokeDasharray="1 1" /></Pointer>
          </EntryBox>
          <SnapButton $on aria-label="Alert"><svg width="17" height="18" viewBox="0 0 17 18" fill="none" stroke="#000" shapeRendering="crispEdges"><rect x=".5" y=".5" width="16" height="17" /><path d="M8.500 3 V12 M8.500 13 V15" strokeWidth="2" /></svg></SnapButton>
          <Message>&lt;Ml&gt; - Select first area corner</Message>
          <UnitBox>
            <UnitSelect defaultValue="Inch" aria-label="Units"><option>Inch</option></UnitSelect>
            <UnitMark />
          </UnitBox>
        </Prompt>
        <Status><StatusBar /></Status>
      </Frame>
      <BottomEdge />
      <Taskbar>
        <StartButton aria-label="Start"><Orb /></StartButton>
        {tasks.map((t) => <TaskButton key={t.name} $active={t.active} $stacked={t.stacked} aria-label={t.name}>{t.art}</TaskButton>)}
        <Tray>
          <svg width="136" height="38" viewBox="0 0 136 38" fill="none">
            <rect x="4" y="15" width="14" height="9" rx="1" fill="#b9b9b4" stroke="#8b8b88" /><path d="M6 18H16M6 21H16" stroke="#555" strokeDasharray="1 1" /><path d="M5 12 Q8 8 11 11 T16 10" stroke="#ccc" />
            <circle cx="33.500" cy="16" r="7" fill="#1c2fc0" stroke="#a9b8e8" /><text x="33.500" y="21" fill="#fff" textAnchor="middle" fontFamily="Open Sans" fontWeight="700" fontSize="13">?</text>
            <path d="M54.500 8.500 h5 v3 h-5 z M51.500 11.500 h5 v3 h-5 z" stroke="#fff" /><path d="M52 21 h6 l-3 3 z M70 22 h8 l-4 -4 z" fill="#fff" />
            <path d="M91 12 V27" stroke="#fff" /><path d="M93 14 h7 v2 h5 v7 h-7 v-2 h-5 z" fill="#eee" /><circle cx="101" cy="23" r="4.500" fill="#d8281e" /><path d="M99 21 l4 4 M103 21 l-4 4" stroke="#fff" strokeWidth="1.500" />
            <path d="M119 14.500 H128.500 V23.500 H118.500 V18 M123.500 24 V26 M119 26.500 H128" stroke="#fff" /><path d="M115 12 v4 h4 v-4 M117 16 v8" stroke="#fff" />
          </svg>
          <TrayClock>19:15<br />2024/3/1</TrayClock>
          <ShowDesktop aria-label="Show desktop" />
        </Tray>
      </Taskbar>
    </Desktop>
  );
}
